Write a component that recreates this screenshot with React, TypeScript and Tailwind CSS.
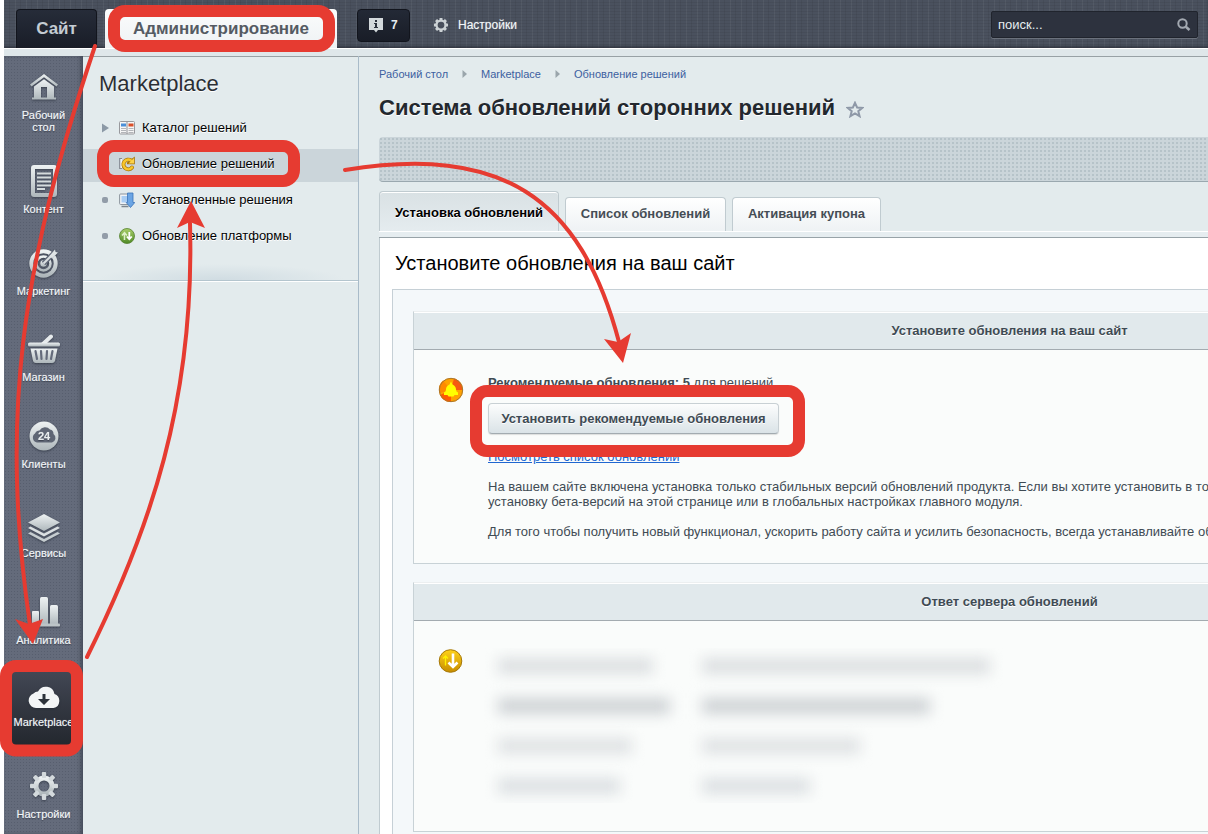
import type { ReactNode } from "react";

const SteelDefs = () => (
  <svg className="absolute h-0 w-0" aria-hidden="true">
    <defs>
      <linearGradient id="steel" x1="0" y1="0" x2="0" y2="1">
        <stop offset="0" stopColor="#eef2f3" />
        <stop offset="1" stopColor="#aeb7bb" />
      </linearGradient>
      <linearGradient id="gold" x1="0" y1="0" x2="0" y2="1">
        <stop offset="0" stopColor="#ffd21a" />
        <stop offset="1" stopColor="#c78d00" />
      </linearGradient>
      <linearGradient id="leaf" x1="0" y1="0" x2="0" y2="1">
        <stop offset="0" stopColor="#a9cf6a" />
        <stop offset="1" stopColor="#4f8a26" />
      </linearGradient>
    </defs>
  </svg>
);

const Icon = ({ w, h, children }: { w: number; h: number; children: ReactNode }) => (
  <svg
    width={w}
    height={h}
    viewBox={`0 0 ${w} ${h}`}
    aria-hidden="true"
    className="drop-shadow-[0_1px_1px_rgba(30,36,48,0.6)]"
  >
    {children}
  </svg>
);

const HomeIcon = () => (
  <Icon w={28} h={26}>
    <path d="M14 0 28 10.500 26.500 12.500 14 3.300 1.500 12.500 0 10.500Z" fill="url(#steel)" />
    <path
      fillRule="evenodd"
      d="M14 5.200 24 12.500V23.500H26V25.500H2V23.500H4V12.500ZM11 13V23.500H17V13Z"
      fill="url(#steel)"
    />
  </Icon>
);

const DocIcon = () => (
  <Icon w={26} h={32}>
    <path
      fillRule="evenodd"
      d="M3 0H23A3 3 0 0 1 26 3V29A3 3 0 0 1 23 32H3A3 3 0 0 1 0 29V3A3 3 0 0 1 3 0ZM4 4V28H22V4Z"
      fill="url(#steel)"
    />
    <path d="M6 8.500H20M6 12.500H20M6 16.500H20M6 20.500H20M6 24H14" stroke="#d5dbdd" strokeWidth="2" />
  </Icon>
);

const TargetIcon = () => (
  <Icon w={30} h={30}>
    <circle cx="14.500" cy="15.500" r="12.200" fill="none" stroke="url(#steel)" strokeWidth="4" />
    <circle cx="14.500" cy="15.500" r="7" fill="none" stroke="url(#steel)" strokeWidth="2.500" />
    <circle cx="14.500" cy="15.500" r="3.200" fill="url(#steel)" />
    <path d="M14.500 15.500 27 3" stroke="#646b7b" strokeWidth="5" />
    <path d="M14.500 15.500 24 6" stroke="#dbe0e2" strokeWidth="2" />
    <path d="M20.500 8 26 1.500 26.500 4 29 4.500 23.500 10 21 9.500Z" fill="#dfe4e6" />
  </Icon>
);

const BasketIcon = () => (
  <Icon w={32} h={30}>
    <path d="M15 10 23 2.500" stroke="#e6eaec" strokeWidth="4" strokeLinecap="round" />
    <rect x="0" y="8.500" width="32" height="4" rx="1.500" fill="url(#steel)" />
    <path d="M2.500 14.500H29.500L27 27A3 3 0 0 1 24 29H8A3 3 0 0 1 5 27Z" fill="url(#steel)" />
    <path
      d="M7.500 17 9 25M13 17 13.500 25M19 17 18.500 25M24.500 17 23 25"
      stroke="#646b7b"
      strokeWidth="2.200"
      strokeLinecap="round"
    />
  </Icon>
);

const ClientsIcon = () => (
  <Icon w={30} h={30}>
    <circle cx="15" cy="15" r="14.500" fill="url(#steel)" />
    <path
      d="M8 21.500A5 5 0 0 1 6 12.500 5 5 0 0 1 10.500 9.500 6.500 6.500 0 0 1 21 8.500 4.500 4.500 0 0 1 24.500 13 4.800 4.800 0 0 1 23 21.500Z"
      fill="#5f6675"
    />
    <text
      x="15"
      y="19"
      textAnchor="middle"
      fontFamily="Liberation Sans, sans-serif"
      fontSize="11"
      fontWeight="700"
      fill="#e8ecee"
    >
      24
    </text>
  </Icon>
);

const LayersIcon = () => (
  <Icon w={32} h={28}>
    <path d="M16 0 32 8.500 16 17 0 8.500Z" fill="url(#steel)" />
    <path d="M2.500 12.500 0 14 16 22.500 32 14 29.500 12.500 16 19.500Z" fill="#dbe0e2" />
    <path d="M2.500 18 0 19.500 16 28 32 19.500 29.500 18 16 25Z" fill="#c6cdd0" />
  </Icon>
);

const ChartIcon = () => (
  <Icon w={32} h={30}>
    <rect x="4" y="14" width="7" height="14" rx="1" fill="url(#steel)" />
    <rect x="12" y="0" width="8" height="28" rx="1.500" fill="url(#steel)" />
    <rect x="22" y="8" width="8" height="20" rx="1.500" fill="url(#steel)" />
    <rect x="1" y="26.500" width="31" height="3" rx="1" fill="#bcc4c7" />
  </Icon>
);

const CloudIcon = () => (
  <Icon w={32} h={24}>
    <path
      d="M8 23A7.500 7.500 0 0 1 5.500 8.500 6 6 0 0 1 10 6.500 8.800 8.800 0 0 1 26.500 9 7.300 7.300 0 0 1 25.500 23Z"
      fill="#f3f5f6"
    />
    <path d="M14.500 9H17.500V14H22L16 20 10 14H14.500Z" fill="#2c323a" />
  </Icon>
);

const teeth = [0, 45, 90, 135, 180, 225, 270, 315];

const GearIcon = () => (
  <Icon w={28} h={28}>
    <circle cx="14" cy="14" r="8" fill="none" stroke="url(#steel)" strokeWidth="5" />
    {teeth.map((a) => (
      <rect key={a} x="11.800" y="0" width="4.400" height="6" rx="1" fill="#d3d9dc" transform={`rotate(${a} 14 14)`} />
    ))}
  </Icon>
);

type SideItem = { label: string; icon: ReactNode; pad: string; box: string; active?: boolean };

const sideItems: SideItem[] = [
  { label: "Рабочий стол", icon: <HomeIcon />, pad: "pt-[11px]", box: "h-10" },
  { label: "Контент", icon: <DocIcon />, pad: "pt-7", box: "h-10" },
  { label: "Маркетинг", icon: <TargetIcon />, pad: "pt-7", box: "h-10" },
  { label: "Магазин", icon: <BasketIcon />, pad: "pt-8", box: "h-10" },
  { label: "Клиенты", icon: <ClientsIcon />, pad: "pt-[33px]", box: "h-10" },
  { label: "Сервисы", icon: <LayersIcon />, pad: "pt-[41px]", box: "h-[34px]" },
  { label: "Аналитика", icon: <ChartIcon />, pad: "pt-[33px]", box: "h-10" },
  { label: "Marketplace", icon: <CloudIcon />, pad: "pt-[10px]", box: "h-[34px]", active: true },
  { label: "Настройки", icon: <GearIcon />, pad: "pt-5", box: "h-10" },
];

const Sidebar = () => (
  <nav className="w-[79px] shrink-0 bg-[#646b7b] bg-[radial-gradient(circle,#575e6e_30%,transparent_45%)] bg-[length:3px_3px] shadow-[inset_-3px_0_4px_-1px_rgba(40,46,60,0.6)]">
    <ul>
      {sideItems.map((it) => (
        <li key={it.label} className={it.active ? "px-1.5 pt-6" : ""}>
          <a
            href="#"
            className={`flex flex-col items-center text-center text-[11px] leading-3 text-[#f2f6f8] [text-shadow:0_0_1px_rgba(242,246,248,0.5),0_1px_1px_rgba(30,36,48,0.7)] ${it.pad} ${
              it.active ? "rounded-lg bg-linear-to-b from-[#434855] to-[#23272e] pb-[18px]" : ""
            }`}
          >
            <span className={`flex items-center justify-center ${it.box}`}>{it.icon}</span>
            <span className="mt-0.5 max-w-16">{it.label}</span>
          </a>
        </li>
      ))}
    </ul>
  </nav>
);

const CatalogIcon = () => (
  <svg width="16" height="14" viewBox="0 0 16 14" aria-hidden="true">
    <rect x="0.500" y="0.500" width="15" height="12.500" rx="1" fill="#f6f6f6" stroke="#98999d" />
    <path d="M8 1V13" stroke="#8d8f94" />
    <rect x="2" y="2.500" width="5" height="3" fill="#4b8fd8" />
    <rect x="9.500" y="2.500" width="5" height="3" fill="#d9502b" />
    <path d="M2 7.500H7M2 9.500H7M2 11.500H7M9.500 7.500H14.500M9.500 9.500H14.500M9.500 11.500H14.500" stroke="#b3b5b9" />
  </svg>
);

const RefreshIcon = () => (
  <svg width="16" height="16" viewBox="0 0 16 16" aria-hidden="true">
    <path d="M3 2.500H0.700V12.500H3" fill="#f3f4f5" stroke="#868b93" strokeWidth="1.200" />
    <path d="M13 11.500A4.800 4.800 0 1 1 12 4.500" fill="none" stroke="#a87405" strokeWidth="4" strokeLinecap="round" />
    <path d="M15.800 0.500V8.300H8V6.500L10 5Z" fill="#a87405" />
    <path d="M13 11.500A4.800 4.800 0 1 1 12 4.500" fill="none" stroke="#f8c62c" strokeWidth="2.600" strokeLinecap="round" />
    <path d="M15 2V7.500H9.500Z" fill="#fbd24a" />
  </svg>
);

const InstalledIcon = () => (
  <svg width="16" height="16" viewBox="0 0 16 16" aria-hidden="true">
    <path d="M2.500 14.500H9.500" stroke="#7d858e" strokeWidth="1.500" />
    <rect x="0.600" y="2" width="10.400" height="10.500" rx="1" fill="#f0f3f6" stroke="#8d959e" />
    <rect x="2.500" y="4" width="6.500" height="6.500" fill="#a9cdf3" />
    <path d="M8.500 1H14V10.500H15.800L11.500 15.500 7.200 10.500H8.500Z" fill="#6ba5e4" stroke="#3b74b9" strokeWidth="0.800" />
  </svg>
);

const PlatformIcon = () => (
  <svg width="16" height="16" viewBox="0 0 16 16" aria-hidden="true">
    <circle cx="8" cy="8" r="7.500" fill="url(#leaf)" stroke="#54802e" strokeWidth="0.800" />
    <path d="M5.500 12V5M3 7.500 5.500 4.800 8 7.500" fill="none" stroke="#dff0c8" strokeWidth="1.600" />
    <path d="M10.300 4V11M7.800 8.500 10.300 11.200 12.800 8.500" fill="none" stroke="#fff" strokeWidth="1.800" />
  </svg>
);

const menu = [
  { label: "Каталог решений", icon: <CatalogIcon />, mark: "arrow" },
  { label: "Обновление решений", icon: <RefreshIcon />, mark: "none", selected: true },
  { label: "Установленные решения", icon: <InstalledIcon />, mark: "dot" },
  { label: "Обновление платформы", icon: <PlatformIcon />, mark: "dot" },
];

const SubMenu = () => (
  <aside className="w-[276px] shrink-0 border-r border-[#a9bbc9]">
    <div className="border-b border-[#b4c5ce] bg-[radial-gradient(ellipse_45%_16px_at_50%_100%,#d0dce2,transparent)] pb-[26px] shadow-[0_1px_0_#fff]">
      <h2 className="px-4 pt-[14px] text-[22px] leading-7 text-[#2b2f35] [text-shadow:0_1px_0_#fff]">Marketplace</h2>
      <ul className="mt-[15px] flex flex-col gap-[3px]">
        {menu.map((m) => (
          <li key={m.label} className={m.selected ? "bg-[#cbd5da]" : ""}>
            <a
              href="#"
              className="flex h-[33px] items-center pb-1 pl-[18px] text-[13px] text-black [text-shadow:0_1px_0_#fff]"
            >
              <span className="flex w-[18px]">
                {m.mark === "arrow" && (
                  <svg width="8" height="10" viewBox="0 0 8 10" aria-hidden="true">
                    <path d="M1 0.500 8 5 1 9.500Z" fill="#8c99a6" />
                  </svg>
                )}
                {m.mark === "dot" && <span className="ml-px size-1.5 rounded-xs bg-[#929ca8]" />}
              </span>
              {m.icon}
              <span className="ml-[7px]">{m.label}</span>
            </a>
          </li>
        ))}
      </ul>
    </div>
  </aside>
);

const TopBar = () => (
  <header className="flex h-12 items-end bg-[#4a515e] bg-[repeating-linear-gradient(90deg,rgba(255,255,255,0.05)_0_1px,transparent_1px_5px,rgba(0,0,0,0.06)_5px_6px,transparent_6px_11px),repeating-linear-gradient(0deg,rgba(0,0,0,0.06)_0_1px,transparent_1px_3px)] pr-[10px] pl-3 shadow-[inset_0_-2px_2px_rgba(35,38,50,0.5)]">
    <a
      href="#"
      className="flex h-[39px] w-[81px] items-center justify-center rounded-t border border-b-0 border-[#12151d] bg-linear-to-b from-[#262c39] to-[#191d27] text-[17px] font-bold text-[#c4ccd3]"
    >
      Сайт
    </a>
    <a
      href="#"
      className="ml-2 flex h-[39px] w-[232px] items-center justify-center rounded-t bg-linear-to-b from-[#fbfcfc] to-[#eef2f4] text-[17px] font-bold text-[#555b63]"
    >
      Администрирование
    </a>
    <a
      href="#"
      className="mb-1.5 ml-5 flex h-[33px] w-[53px] items-center rounded border border-[#12151d] bg-linear-to-b from-[#232936] to-[#191d27] pb-0.5 pl-[11px] text-xs font-bold text-[#e8edf0]"
    >
      <svg width="14" height="15" viewBox="0 0 14 15" className="mt-0.5 mr-2" aria-hidden="true">
        <path d="M0 0H14V12H9L7 14.500 5 12H0Z" fill="#d3d9dc" />
        <path d="M6 2H8V4H6ZM5 5H8V9H9V10H5V9H6V6H5Z" fill="#2a303c" />
      </svg>
      7
    </a>
    <a
      href="#"
      className="mb-1.5 ml-6 flex h-[33px] items-center pb-0.5 text-xs text-[#f2f6f8] [text-shadow:0_0_1px_rgba(242,246,248,0.5)]"
    >
      <svg width="14" height="14" viewBox="0 0 28 28" className="mr-2.5" aria-hidden="true">
        <circle cx="14" cy="14" r="9" fill="none" stroke="#ccd2d5" strokeWidth="4.500" />
        {teeth.map((a) => (
          <rect key={a} x="11" y="0" width="6" height="5" rx="1" fill="#ccd2d5" transform={`rotate(${a} 14 14)`} />
        ))}
      </svg>
      Настройки
    </a>
    <label className="mb-[10px] ml-auto flex h-[27px] w-[207px] items-center rounded-xs border border-[#20242d] bg-[#2d323e] px-1.5 shadow-[0_1px_0_#6b717c]">
      <input
        type="text"
        aria-label="Поиск"
        placeholder="поиск..."
        className="min-w-0 flex-1 bg-transparent text-[13px] text-white outline-none placeholder:text-[#e6ecef]"
      />
      <svg width="14" height="14" viewBox="0 0 14 14" aria-hidden="true">
        <circle cx="5.500" cy="5.500" r="4.200" fill="none" stroke="#a3a9b1" strokeWidth="2" />
        <path d="M8.800 8.800 12.500 12" stroke="#a3a9b1" strokeWidth="2.600" />
      </svg>
    </label>
  </header>
);

const Chevron = () => (
  <svg width="5" height="8" viewBox="0 0 5 8" className="mx-[14px]" aria-hidden="true">
    <path d="M0.500 0 5 4 0.500 8Z" fill="#9aa5ab" />
  </svg>
);

const Panel = ({ title, children }: { title: string; children: ReactNode }) => (
  <section className="border border-[#c8d2d6] border-t-[#eceff0] bg-[#fafcfb]">
    <h3 className="flex h-[38px] items-center justify-center border-b border-[#a3abb0] bg-[#e1e9ec] text-[13px] font-bold text-[#3f4b54] shadow-[inset_0_1px_0_#fff] [text-shadow:0_1px_0_#fff]">
      {title}
    </h3>
    {children}
  </section>
);

const BellBadge = () => (
  <svg width="26" height="26" viewBox="0 0 26 26" aria-hidden="true">
    <circle cx="13" cy="13" r="12" fill="#ffa200" />
    <path d="M13 13 5 3.500A12 12 0 0 0 1.500 16Z" fill="#ff8a00" />
    <path d="M13 13 16 1.500A12 12 0 0 1 24.500 13Z" fill="#f65a10" />
    <path d="M13 13 13 25A12 12 0 0 1 2 18Z" fill="#ff5a00" />
    <circle cx="13" cy="13" r="11.700" fill="none" stroke="#a8762f" />
    <path
      d="M13 4.500 14.500 7.500C17 8.500 18 10.500 18 12.500L18.500 14.500 20 15.500V18H16.500L15.500 19.500H10.500L9.500 18H6V15.500L7.500 14.500 8 12.500C8 10.500 9 8.500 11.500 7.500Z"
      fill="#ffff00"
    />
  </svg>
);

const DownBadge = () => (
  <svg width="26" height="26" viewBox="0 0 26 26" aria-hidden="true">
    <circle cx="12.500" cy="13" r="11.300" fill="url(#gold)" stroke="#a67808" />
    <path d="M7.500 17.500V8.500M5 10.500 7.500 8 10 10.500" fill="none" stroke="#fff000" strokeWidth="1.300" />
    <path d="M15 5.500V19M10.500 14.500 15 19 19.500 14.500" fill="none" stroke="#fff" strokeWidth="2.600" />
  </svg>
);

const blurred = [
  { a: "w-[155px]", b: "w-[288px]", tone: "bg-[#dcdfe1]" },
  { a: "w-[172px]", b: "w-[228px]", tone: "bg-[#ced2d5]" },
  { a: "w-[134px]", b: "w-[158px]", tone: "bg-[#dfe2e4]" },
  { a: "w-[122px]", b: "w-[108px]", tone: "bg-[#dce0e3]" },
];

const Main = () => (
  <main className="flex min-w-0 flex-1 flex-col overflow-hidden pl-5">
    <nav className="flex items-center pt-[11px] text-[11px] leading-[14px] text-[#3c60a0]">
      <a href="#">Рабочий стол</a>
      <Chevron />
      <a href="#">Marketplace</a>
      <Chevron />
      <a href="#">Обновление решений</a>
    </nav>
    <div className="mt-3 flex items-center">
      <h1 className="text-[22px] leading-[30px] font-bold text-[#23282e] [text-shadow:0_1px_0_#fff]">
        Система обновлений сторонних решений
      </h1>
      <svg width="18" height="17" viewBox="0 0 18 17" className="mt-0.5 ml-[11px]" aria-hidden="true">
        <path
          d="M9 1.800 11.100 6.500 16.300 6.900 12.300 10.200 13.600 15.200 9 12.400 4.400 15.200 5.700 10.200 1.700 6.900 6.900 6.500Z"
          fill="none"
          stroke="#8f99a8"
          strokeWidth="2"
        />
      </svg>
    </div>
    <div className="mt-3.5 h-[45px] rounded-l border-b border-[#9aa8af] bg-[#cbd5da] bg-[radial-gradient(circle,#b6c3c9_25%,transparent_40%)] bg-[length:4px_4px]" />
    <div className="mt-[9px] flex items-start">
      <button className="-mb-1 h-11 w-[180px] rounded-t border border-b-0 border-[#c0cbd0] bg-linear-to-b from-[#d9e1e4] to-[#e6edf0] pb-0.5 text-[13px] font-bold text-black shadow-[inset_0_1px_0_#fff] [text-shadow:0_1px_0_#fff]">
        Установка обновлений
      </button>
      <button className="mt-1.5 ml-1.5 h-[34px] w-[161px] rounded-t border border-b-0 border-[#c0cbd0] bg-linear-to-b from-white to-[#eef2f4] pb-0.5 text-[13px] font-bold text-[#454d55]">
        Список обновлений
      </button>
      <button className="mt-1.5 ml-1.5 h-[34px] w-[149px] rounded-t border border-b-0 border-[#c0cbd0] bg-linear-to-b from-white to-[#eef2f4] pb-0.5 text-[13px] font-bold text-[#454d55]">
        Активация купона
      </button>
    </div>
    <div className="h-[7px] border-t border-b border-t-white border-b-[#98a3a8] bg-[#e6edf0]" />
    <div className="flex flex-1 flex-col border-l border-[#c0cbd0] bg-white pl-3">
      <h2 className="px-[3px] pt-3 text-xl leading-[26px]">Установите обновления на ваш сайт</h2>
      <div className="mt-[13px] flex min-w-[1234px] flex-1 flex-col gap-[18px] border-t border-l border-[#c6d0d6] bg-[#f4f8fa] px-5 pt-[21px]">
        <Panel title="Установите обновления на ваш сайт">
          <div className="flex pt-[25px] pb-6 pl-6 text-[13px] leading-[15px] text-[#3f4b54]">
            <span className="mt-0.5 w-[50px] shrink-0">
              <BellBadge />
            </span>
            <div>
              <p>
                <b>Рекомендуемые обновления: 5</b> для решений
              </p>
              <button className="mt-[13px] flex h-[31px] w-[291px] items-center justify-center rounded border border-[#c8d0d4] border-b-[#a2abb0] bg-linear-to-b from-[#fcfdfd] to-[#dae3e7] text-[13px] font-bold text-[#3f4b54] shadow-[0_1px_1px_rgba(0,0,0,0.12)] [text-shadow:0_1px_0_#fff]">
                Установить рекомендуемые обновления
              </button>
              <a href="#" className="mt-[15px] block text-[#2067d0] underline">
                Посмотреть список обновлений
              </a>
              <p className="mt-[15px] whitespace-nowrap">
                На вашем сайте включена установка только стабильных версий обновлений продукта. Если вы хотите установить в то
                <br />
                установку бета-версий на этой странице или в глобальных настройках главного модуля.
              </p>
              <p className="mt-[15px] whitespace-nowrap">
                Для того чтобы получить новый функционал, ускорить работу сайта и усилить безопасность, всегда устанавливайте об
              </p>
            </div>
          </div>
        </Panel>
        <Panel title="Ответ сервера обновлений">
          <div className="flex pt-[27px] pb-7 pl-6">
            <span className="w-10 shrink-0">
              <DownBadge />
            </span>
            <div className="flex h-[155px] flex-col gap-6 overflow-hidden pt-[10px] pr-6 pl-5" aria-hidden="true">
              {blurred.map((r) => (
                <div key={r.a} className="flex blur-[7px]">
                  <div className="w-[204px]">
                    <div className={`h-4 ${r.a} ${r.tone}`} />
                  </div>
                  <div className={`h-4 ${r.b} ${r.tone}`} />
                </div>
              ))}
            </div>
          </div>
        </Panel>
      </div>
    </div>
  </main>
);

const Annotations = () => (
  <svg
    width="1208"
    height="834"
    viewBox="0 0 1208 834"
    className="pointer-events-none absolute top-0 left-0"
    aria-hidden="true"
  >
    <g fill="none" stroke="#e63b31" strokeWidth="12">
      <rect x="114" y="11" width="215" height="35" rx="11" />
      <rect x="103" y="146" width="191" height="35" rx="11" />
      <rect x="6" y="666" width="71" height="84.500" rx="10" />
      <rect x="476" y="391" width="323" height="60" rx="11" />
    </g>
    <g fill="none" stroke="#e63b31" strokeWidth="4" strokeLinecap="round">
      <path d="M95 46C20 270 0 420 30 625" />
      <path d="M87 657C150 530 195 400 190 223" />
      <path d="M345 170C500 145 580 195 619 342" />
    </g>
    <g fill="#e63b31">
      <path d="M33 644 15 619 29 624 43 619Z" />
      <path d="M191 201 177 228 190 222 205 228Z" />
      <path d="M623 363 604 339 618 342 631 333Z" />
    </g>
  </svg>
);

export default function App() {
  return (
    <div className="relative flex min-h-screen flex-col overflow-x-hidden bg-white pl-1 font-['Liberation_Sans',Arial,sans-serif]">
      <SteelDefs />
      <TopBar />
      <div className="h-2 border-t border-white bg-[#dfe7ea]" />
      <div className="flex flex-1 bg-[#e3ebed] shadow-[inset_0_1px_0_#98a1a5]">
        <Sidebar />
        <SubMenu />
        <Main />
      </div>
      <Annotations />
    </div>
  );
}
